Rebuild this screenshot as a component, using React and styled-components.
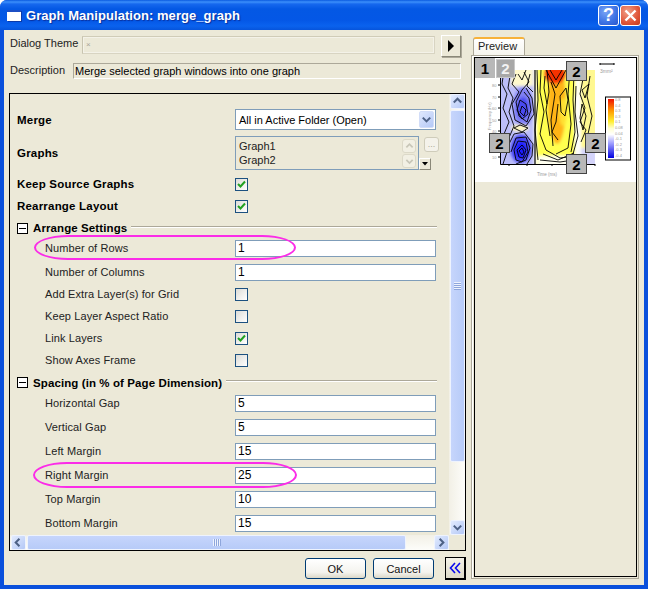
import React from "react";
import styled, { createGlobalStyle } from "styled-components";

const Global = createGlobalStyle`
  html, body { margin: 0; padding: 0; background: #fff; }
  body { font-family: "Liberation Sans", Arial, sans-serif; font-size: 11px; color: #000; }
  * { box-sizing: border-box; }
`;

const Window = styled.div`
  width: 648px; height: 589px; display: flex; flex-direction: column;
  background: #0a50dc; border-radius: 7px 7px 0 0; overflow: hidden;
`;
const TitleBar = styled.div`
  height: 30px; flex: none; display: flex; align-items: center; padding: 1px 7px 0 7px;
  background: linear-gradient(180deg, #0a5ae0 0, #3c8ffb 2px, #1668ee 4px, #0458e4 9px, #0457e6 20px, #0a62ee 26px, #0654dc 30px);
`;
const TitleIcon = styled.span`
  width: 14px; height: 11px; flex: none; background: #fff; border-top: 2px solid #1c4fc4;
  box-shadow: 1px 1px 0 #0b3aa8; margin-right: 5px;
`;
const TitleText = styled.span`
  flex: 1; color: #fff; font-weight: 700; font-size: 13px; letter-spacing: 0.05px;
  text-shadow: 1px 1px 1px #0a2f9c;
`;
const CaptionButton = styled.span`
  width: 21px; height: 21px; margin-left: 1px; border: 1px solid #fff; border-radius: 3px; flex: none;
  display: flex; align-items: center; justify-content: center;
  background: ${p => p.$close
    ? "radial-gradient(circle at 35% 30%, #f0a088, #e0563a 60%, #c43a1c)"
    : "radial-gradient(circle at 35% 30%, #7aa4f5, #3c72e4 60%, #2a56cc)"};
  color: #fff; font-weight: 700; font-size: 18px;
`;
const Body = styled.div`
  flex: 1; display: flex; gap: 5px; margin: 0 4px 4px 4px; padding: 0 5px 0 5px; background: #ece9d8; min-height: 0;
`;
const LeftColumn = styled.div`
  width: 457px; flex: none; display: flex; flex-direction: column; padding-top: 5px;
`;
const ThemeRow = styled.div`
  display: flex; align-items: flex-start; height: 22px;
`;
const TopLabel = styled.span`
  width: ${p => p.$w}px; flex: none; padding-left: 1px; line-height: 14px; padding-top: ${p => p.$top || 0}px; color: #222;
  font-size: 11px;
`;
const ThemeField = styled.div`
  width: 353px; height: 18px; margin-top: 1px; border: 1px solid #d8d4c2; border-left-color: #c8c4b0; border-top-color: #d0ccb8;
  box-shadow: inset 1px 1px 0 #f4f2e8, inset -1px -1px 0 #f4f2e8;
  color: #a8a498; font-size: 8px; line-height: 15px; padding-left: 3px;
`;
const ArrowButton = styled.button`
  width: 20px; height: 22px; margin-left: 6px; padding: 0; display: flex; align-items: center; justify-content: center;
  background: #ece9d8; border: 1px solid; border-color: #fff #8a8878 #8a8878 #fff; box-shadow: 1px 1px 0 #aca899;
`;
const DescriptionRow = styled.div`
  display: flex; height: 16px; margin-top: 6px;
`;
const DescriptionField = styled.div`
  width: 388px; height: 16px; border: 1px solid; border-color: #aca899 #fff #fff #aca899;
  line-height: 14px; padding-left: 1px; font-size: 11px;
`;
const Panel = styled.div`
  margin-top: 14px; height: 458px; border: 1px solid #000; display: grid;
  grid-template-columns: 439px 16px; grid-template-rows: 441px 15px;
`;
const Form = styled.div`
  overflow: hidden; padding-top: 15px;
`;
const Row = styled.div`
  position: relative; display: grid; grid-template-columns: 225px 1fr; height: ${p => p.$h}px;
  align-items: ${p => p.$top ? "start" : "center"};
  padding-top: ${p => p.$pad || 0}px;
`;
const Label = styled.span`
  padding-left: ${p => p.$indent ? 35 : 7}px;
  font-weight: ${p => p.$bold ? 700 : 400};
  font-size: ${p => p.$bold ? 11.5 : 11}px;
  line-height: ${p => p.$lh || 17}px;
  letter-spacing: ${p => p.$bold ? "0.2px" : "0.1px"};
  color: ${p => p.$bold ? "#000" : "#222"};
`;
const TextInput = styled.div`
  width: 201px; height: 17px; background: #fff; border: 1px solid #7f9db9; padding-left: 2px; line-height: 15px; font-size: 12px;
`;
const Select = styled.div`
  width: 201px; height: 21px; background: #fff; border: 1px solid #7f9db9; display: flex; align-items: center;
  padding-left: 3px; font-size: 11px; justify-content: space-between;
`;
const SelectArrow = styled.span`
  width: 15px; height: 17px; margin-right: 1px; background: linear-gradient(135deg, #dfe8fd, #b4c8f6);
  border-radius: 2px; display: flex; align-items: center; justify-content: center; border: 1px solid #d2ddf8;
`;
const ListCell = styled.div`
  display: flex; position: relative; height: 34px;
`;
const ListBox = styled.div`
  width: 184px; height: 34px; background: #ece9d8; border: 1px solid #7f9db9; padding: 2px 0 0 3px; line-height: 14px;
  font-size: 11px; position: relative; color: #222;
`;
const SpinButton = styled.span`
  position: absolute; right: 2px; top: ${p => p.$top}px; width: 14px; height: 14px; border: 1px solid #dcd9c8; border-radius: 3px;
  background: #f2f0e4; display: flex; align-items: center; justify-content: center;
`;
const EllipsisButton = styled.span`
  width: 15px; height: 15px; margin: 1px 0 0 5px; border: 1px solid #cfccba; border-radius: 3px; background: #f4f2ea;
  color: #aca899; font-size: 9px; line-height: 12px; text-align: center;
`;
const MiniDrop = styled.span`
  position: absolute; left: 184px; top: 22px; width: 12px; height: 12px; background: #ece9d8;
  border: 1px solid; border-color: #fff #8a8878 #8a8878 #fff; display: flex; align-items: center; justify-content: center;
`;
const Check = styled.span`
  width: 13px; height: 13px; border: 1px solid #1c5180; display: flex; align-items: center; justify-content: center;
  background: linear-gradient(135deg, #dcdcd7, #fff);
`;
const SectionRow = styled.div`
  height: ${p => p.$h}px; display: flex; align-items: center; padding-left: 7px;
`;
const Toggle = styled.span`
  width: 11px; height: 11px; border: 1px solid #000; flex: none; position: relative; background: #fff; margin-right: 5px;
  &::after { content: ""; position: absolute; left: 1px; right: 1px; top: 4px; height: 1px; background: #000; }
`;
const SectionTitle = styled.span`
  font-weight: 700; font-size: 11.5px; letter-spacing: 0.1px; flex: none;
`;
const SectionLine = styled.span`
  flex: 1; margin: -3px 12px 0 4px; height: 2px; border-top: 1px solid #aca899; border-bottom: 1px solid #fff;
`;
const Highlight = styled.span`
  position: absolute; left: ${p => p.$left}px; top: ${p => p.$top}px; width: ${p => p.$w}px; height: ${p => p.$h}px;
  border: 2px solid #fb2ce8; border-radius: 34px / 50%; pointer-events: none;
`;
const VScroll = styled.div`
  display: flex; flex-direction: column; align-items: center; background: linear-gradient(90deg, #f2f0e6, #fdfdfa);
`;
const HScroll = styled.div`
  display: flex; align-items: center; padding-left: 1px; background: linear-gradient(180deg, #f2f0e6, #fdfdfa);
`;
const ScrollButton = styled.span`
  width: 15px; height: 15px; flex: none; border: 1px solid #eef3fe; border-radius: 2px;
  background: linear-gradient(135deg, #e2ebfe, #b4c8f6); display: flex; align-items: center; justify-content: center;
`;
const VThumb = styled.div`
  width: 15px; height: 352px; margin-top: 1px; background: linear-gradient(90deg, #c6d5fc, #b7cbf8); border: 1px solid #eef3fe; border-radius: 2px;
  display: flex; align-items: center; justify-content: center;
`;
const VSpacer = styled.div` flex: 1; `;
const HThumb = styled.div`
  width: 379px; height: 15px; margin-left: 1px; background: linear-gradient(180deg, #c6d5fc, #b7cbf8); border: 1px solid #eef3fe; border-radius: 2px;
  display: flex; align-items: center; justify-content: center;
`;
const Grip = styled.span`
  width: ${p => p.$v ? 7 : 8}px; height: ${p => p.$v ? 8 : 7}px;
  background: repeating-linear-gradient(${p => p.$v ? "180deg" : "90deg"}, #eef3fe 0 1px, #8ea6dc 1px 2px);
`;
const Corner = styled.div` background: #ece9d8; `;
const Footer = styled.div`
  display: flex; justify-content: flex-end; align-items: center; margin-top: 6px; height: 23px;
`;
const PushButton = styled.button`
  width: 61px; height: 21px; margin-right: 7px; border: 1px solid #003c74; border-radius: 3px;
  background: linear-gradient(180deg, #fff, #f4f3ee 70%, #dcd8c8);
  font: 11px "Liberation Sans", Arial, sans-serif; color: #111; padding: 0;
`;
const CollapseButton = styled.button`
  width: 21px; height: 23px; margin-left: 4px; padding: 0; display: flex; align-items: center; justify-content: center;
  background: linear-gradient(180deg, #f4f2e8, #dedac8); border: 1px solid #000; border-right-width: 2px; border-bottom-width: 2px;
`;
const RightColumn = styled.div`
  width: 168px; flex: none; display: flex; flex-direction: column; padding: 7px 0 6px 0;
`;
const Tab = styled.div`
  width: 52px; height: 18px; margin-left: 2px; border: 1px solid #aca899; border-bottom: none; border-top: 2px solid #f7b23a;
  border-radius: 3px 3px 0 0; background: linear-gradient(180deg, #fff, #f6f5ee);
  font-size: 11px; line-height: 15px; padding-left: 4px; color: #222;
`;
const TabPane = styled.div`
  flex: 1; border: 1px solid #aca899; box-shadow: inset 1px 1px 0 #fff; padding: 1px 1px 1px 2px; display: flex;
`;
const PreviewFrame = styled.div`
  flex: 1; border: 1px solid #000; position: relative; background: #ece9d8;
`;
const PreviewPicture = styled.svg`
  display: block; width: 161px; height: 124px; background: #fff;
`;
const Badge = styled.span`
  position: absolute; left: ${p => p.$x - 475}px; top: ${p => p.$y - 58}px; width: ${p => p.$w || 21}px; height: ${p => p.$h || 20}px;
  background: ${p => p.$faded ? "#a8a8a8" : "#b8b8b8"};
  color: ${p => p.$faded ? "#f2f2f2" : "#000"};
  border: ${p => p.$plain ? "none" : p.$faded ? "1px solid #c8c8c8" : "1px solid #444"};
  font-weight: 700; font-size: 15px; display: flex; align-items: center; justify-content: center;
`;

const chevron = { up: "M3 8 L7 4 L11 8", down: "M3 5 L7 9 L11 5", left: "M8 3 L4 7 L8 11", right: "M5 3 L9 7 L5 11" };
const Chev = ({ dir, color = "#4d6185", size = 13, width = 2.2 }) => (
  <svg width={size} height={size} viewBox="0 0 14 14" fill="none" stroke={color} strokeWidth={width}>
    <path d={chevron[dir]} />
  </svg>
);
const CheckBox = ({ on }) => (
  <Check>
    {on && (
      <svg width="9" height="9" viewBox="0 0 9 9" fill="none" stroke="#21a121" strokeWidth="2">
        <path d="M1 4 L3.5 6.5 L8 1.5" />
      </svg>
    )}
  </Check>
);
const FieldRow = ({ label, value, h = 24, children }) => (
  <Row $h={h} $top $pad={1}>
    <Label $indent>{label}</Label>
    <TextInput>{value}</TextInput>
    {children}
  </Row>
);
const CheckRow = ({ label, on, bold }) => (
  <Row $h={22}>
    <Label $indent={!bold} $bold={bold}>{label}</Label>
    <CheckBox on={on} />
  </Row>
);
const Section = ({ title, h = 22 }) => (
  <SectionRow $h={h}>
    <Toggle />
    <SectionTitle>{title}</SectionTitle>
    <SectionLine />
  </SectionRow>
);

const ticks = [[80, 85], [70, 97], [60, 108], [50, 120], [40, 131], [30, 142], [10, 157]];
const legendLabels = ["0.8", "0.4", "0.3", "0.3", "0.1", "0.08", "0.04", "-0.1", "-0.2", "-0.3", "-0.4"];
const contours = [
  "M504 70 L502 84 L507 94 L503 108 L509 122 L504 134 L507 152 L503 164",
  "M511 70 L508 88 L513 98 L509 112 L514 126 L508 140",
  "M516 74 L512 84 L519 92 L512 104 L515 120 L526 126 L534 114 L532 98 L526 88",
  "M524 72 L529 82 L522 90 L516 102 L519 116 L527 122 L531 110 L529 98 L524 92",
  "M520 100 L526 104 L528 114 L522 119 L517 110 Z",
  "M522 106 L526 110 L524 116 L520 112 Z",
  "M518 74 L522 80 L526 70",
  "M530 74 L527 86 L533 92",
  "M508 146 L514 134 L524 132 L533 144 L532 156 L527 164",
  "M511 152 L516 138 L526 137 L530 148 L526 160 L516 164",
  "M514 150 L518 141 L526 142 L528 152 L522 162 L516 160 Z",
  "M517 150 L522 145 L526 150 L523 158 L519 157 Z",
  "M519 151 L522 148 L524 152 L522 155 Z",
  "M514 128 L520 125 L528 128 L522 132 Z",
  "M537 70 L538 100 L535 130 L538 160",
  "M541 70 L540 92 L544 112 L540 134 L546 150 L560 158 L575 156",
  "M545 76 L544 88 L547 104",
  "M547 70 L549 92 L546 110 L550 136",
  "M551 82 L555 94 L551 120 L553 146",
  "M546 70 L556 88 L566 70",
  "M550 70 L556 80 L562 70",
  "M558 104 L556 122 L552 132 L558 140",
  "M560 96 L566 88 L568 100 L565 116 L561 112 Z",
  "M570 70 L568 94 L571 124 L568 148 L556 154",
  "M574 72 L573 100 L575 132 L571 152",
  "M576 86 L575 112 L578 136 L573 154 L566 160",
  "M584 74 L580 94 L585 108 L580 122 L586 130 L581 142",
  "M590 76 L587 96 L592 116 L588 134",
  "M582 90 L589 84 L585 98 Z",
  "M582 104 L586 116 L583 130 L580 118 Z",
  "M540 160 L560 162 L580 159",
  "M543 154 L558 160 L574 153",
];

const Preview = () => (
  <PreviewPicture viewBox="475 58 161 124">
    <defs>
      <clipPath id="plot"><rect x="500" y="70" width="95" height="94" /></clipPath>
      <filter id="soft" x="-20%" y="-20%" width="140%" height="140%"><feGaussianBlur stdDeviation="1.8" /></filter>
      <linearGradient id="scale" x1="0" y1="0" x2="0" y2="1">
        <stop offset="0" stopColor="#f01000" />
        <stop offset="0.2" stopColor="#ff9a00" />
        <stop offset="0.38" stopColor="#ffee30" />
        <stop offset="0.5" stopColor="#ffffd0" />
        <stop offset="0.6" stopColor="#ffffff" />
        <stop offset="0.75" stopColor="#a0a0ff" />
        <stop offset="1" stopColor="#0000e0" />
      </linearGradient>
    </defs>
    <g clipPath="url(#plot)">
      <rect x="500" y="70" width="95" height="94" fill="#fffff0" />
      <g filter="url(#soft)">
        <rect x="496" y="66" width="38" height="102" fill="#bcbefa" />
        <rect x="511" y="66" width="22" height="20" fill="#fff9cc" />
        <ellipse cx="523" cy="107" rx="10" ry="20" fill="#8080f4" />
        <ellipse cx="523" cy="108" rx="6" ry="11" fill="#4a4af0" />
        <ellipse cx="521" cy="149" rx="11" ry="15" fill="#4a4af4" />
        <ellipse cx="521" cy="150" rx="6" ry="9" fill="#1a1aff" />
        <ellipse cx="520" cy="128" rx="9" ry="3.5" fill="#fff8c0" />
        <rect x="537" y="66" width="38" height="102" fill="#ffff50" />
        <rect x="581" y="66" width="16" height="84" fill="#fff890" />
        <ellipse cx="557" cy="104" rx="9" ry="40" fill="#ffb418" />
        <ellipse cx="555" cy="74" rx="11" ry="10" fill="#f53000" />
        <ellipse cx="563" cy="112" rx="4" ry="14" fill="#ffe030" />
        <rect x="575" y="96" width="5" height="72" fill="#ffffff" />
        <rect x="581" y="148" width="16" height="18" fill="#d4d4fa" />
        <rect x="538" y="156" width="40" height="12" fill="#fffff0" />
      </g>
      <g fill="none" stroke="#000" strokeWidth="0.9">
        {contours.map(d => <path key={d} d={d} />)}
        <path d="M535 70 V164" strokeWidth="1.2" />
      </g>
    </g>
    <g stroke="#000" strokeWidth="1" fill="none">
      <path d="M500.5 78 V164.5 H595" />
      {ticks.map(([, y]) => <path key={y} d={`M498 ${y} H500`} />)}
      <path d="M509 164 v2 M527 164 v2 M552 164 v2 M573 164 v2 M595 164 v2" />
      <path d="M600 64 H614 M600 63 v2 M614 63 v2" />
      <rect x="605.5" y="97" width="25" height="63" strokeWidth="1" />
    </g>
    <g fontFamily="Liberation Sans, sans-serif" fontSize="4" fill="#999">
      {ticks.map(([label, y]) => <text key={y} x="492" y={y + 1.5}>{label}</text>)}
      <text x="0" y="0" transform="translate(491 130) rotate(-90)">Frequency (Hz)</text>
      <text x="537" y="176" fontSize="4.5">Time (ms)</text>
      <text x="600" y="73" fontSize="5">3mm²</text>
      {legendLabels.map((l, i) => <text key={i} x="615" y={101 + i * 5.6}>{l}</text>)}
    </g>
    <rect x="608" y="99" width="6" height="59" fill="url(#scale)" />
  </PreviewPicture>
);

export default function App() {
  return (
    <Window>
      <Global />
      <TitleBar>
        <TitleIcon />
        <TitleText>Graph Manipulation: merge_graph</TitleText>
        <CaptionButton>?</CaptionButton>
        <CaptionButton $close>
          <svg width="13" height="13" viewBox="0 0 13 13" stroke="#fff" strokeWidth="2.4"><path d="M1.5 1.5 L11.5 11.5 M11.5 1.5 L1.5 11.5" /></svg>
        </CaptionButton>
      </TitleBar>
      <Body>
        <LeftColumn>
          <ThemeRow>
            <TopLabel $w={73} $top={1}>Dialog Theme</TopLabel>
            <ThemeField>×</ThemeField>
            <ArrowButton>
              <svg width="8" height="12" viewBox="0 0 8 12"><path d="M1 0 L7 6 L1 12 Z" fill="#000" /></svg>
            </ArrowButton>
          </ThemeRow>
          <DescriptionRow>
            <TopLabel $w={64}>Description</TopLabel>
            <DescriptionField>Merge selected graph windows into one graph</DescriptionField>
          </DescriptionRow>
          <Panel>
            <Form>
              <Row $h={27} $top>
                <Label $bold $lh={23}>Merge</Label>
                <Select>All in Active Folder (Open)<SelectArrow><Chev dir="down" /></SelectArrow></Select>
              </Row>
              <Row $h={37} $top>
                <Label $bold $lh={34}>Graphs</Label>
                <ListCell>
                  <ListBox>
                    Graph1<br />Graph2
                    <SpinButton $top={2}><Chev dir="up" color="#c8c6b8" size={11} /></SpinButton>
                    <SpinButton $top={17}><Chev dir="down" color="#c8c6b8" size={11} /></SpinButton>
                  </ListBox>
                  <EllipsisButton>...</EllipsisButton>
                  <MiniDrop>
                    <svg width="6" height="4" viewBox="0 0 6 4"><path d="M0 0 H6 L3 3.5 Z" fill="#000" /></svg>
                  </MiniDrop>
                </ListCell>
              </Row>
              <CheckRow bold label="Keep Source Graphs" on />
              <CheckRow bold label="Rearrange Layout" on />
              <Section title="Arrange Settings" />
              <FieldRow label="Number of Rows" value="1">
                <Highlight $left={24} $top={-4} $w={262} $h={25} />
              </FieldRow>
              <FieldRow label="Number of Columns" value="1" h={20} />
              <CheckRow label="Add Extra Layer(s) for Grid" />
              <CheckRow label="Keep Layer Aspect Ratio" />
              <CheckRow label="Link Layers" on />
              <CheckRow label="Show Axes Frame" />
              <Section title="Spacing (in % of Page Dimension)" h={23} />
              <FieldRow label="Horizontal Gap" value="5" />
              <FieldRow label="Vertical Gap" value="5" />
              <FieldRow label="Left Margin" value="15" />
              <FieldRow label="Right Margin" value="25">
                <Highlight $left={23} $top={-4} $w={264} $h={26} />
              </FieldRow>
              <FieldRow label="Top Margin" value="10" />
              <FieldRow label="Bottom Margin" value="15" />
            </Form>
            <VScroll>
              <ScrollButton><Chev dir="up" /></ScrollButton>
              <VThumb><Grip $v /></VThumb>
              <VSpacer />
              <ScrollButton><Chev dir="down" /></ScrollButton>
            </VScroll>
            <HScroll>
              <ScrollButton><Chev dir="left" /></ScrollButton>
              <HThumb><Grip /></HThumb>
              <VSpacer />
              <ScrollButton><Chev dir="right" /></ScrollButton>
            </HScroll>
            <Corner />
          </Panel>
          <Footer>
            <PushButton>OK</PushButton>
            <PushButton>Cancel</PushButton>
            <CollapseButton>
              <svg width="13" height="12" viewBox="0 0 13 12" fill="none" stroke="#0a0aee" strokeWidth="1.6">
                <path d="M6 1 L1.5 6 L6 11 M11 1 L6.5 6 L11 11" />
              </svg>
            </CollapseButton>
          </Footer>
        </LeftColumn>
        <RightColumn>
          <Tab>Preview</Tab>
          <TabPane>
            <PreviewFrame>
              <Preview />
              <Badge $x={475} $y={58} $w={20} $h={20} $plain>1</Badge>
              <Badge $x={496} $y={59} $w={19} $h={19} $faded>2</Badge>
              <Badge $x={566} $y={61}>2</Badge>
              <Badge $x={489} $y={133}>2</Badge>
              <Badge $x={585} $y={133}>2</Badge>
              <Badge $x={566} $y={154}>2</Badge>
            </PreviewFrame>
          </TabPane>
        </RightColumn>
      </Body>
    </Window>
  );
}
